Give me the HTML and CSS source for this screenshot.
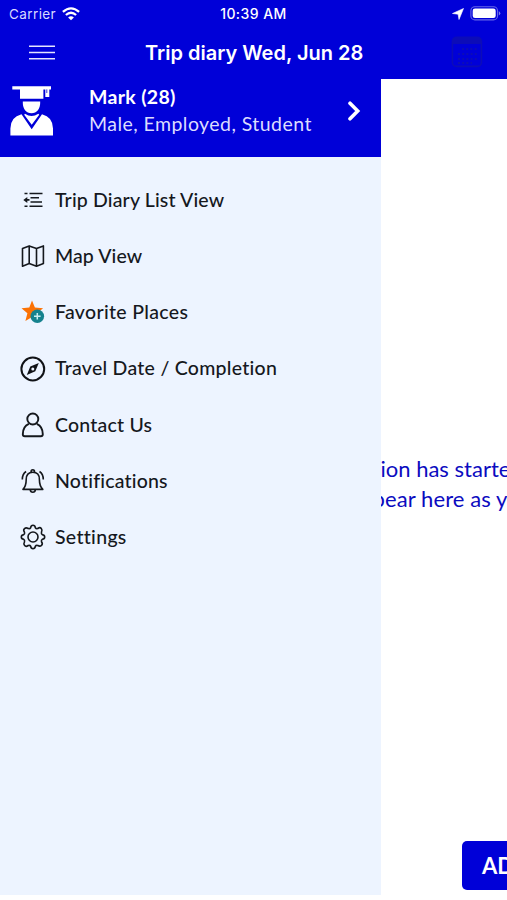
FILE: index.html
```html
<!DOCTYPE html>
<html lang="en">
<head>
<meta charset="utf-8">
<title>Trip diary</title>
<link rel="stylesheet" href="styles.css">
</head>
<body>
<div class="screen">
  <header class="top">
    <div class="status">
      <div class="carrier"><span class="carrier-name">Carrier</span>
        <svg width="18" height="14" viewBox="0 0 18 14" fill="none" stroke="#fff" stroke-width="2.3"><path d="M.9 4.9Q9-2.1 17.1 4.9M3.9 8Q9 3.6 14.1 8"/><path d="M9 13.3 6.1 10.5Q9 8.1 11.9 10.5Z" fill="#fff" stroke="none"/></svg>
      </div>
      <span class="time">10:39 AM</span>
      <div class="power">
        <svg width="12" height="12" viewBox="0 0 12 12"><path d="M11.5.5 7 11.5 6.1 6.2.5 5.5Z" fill="#fff" stroke="#fff" stroke-width=".6"/></svg>
        <svg width="31" height="15" viewBox="0 0 31 15"><rect x=".9" y=".7" width="26.6" height="13.2" rx="4" fill="none" stroke="#6666e8" stroke-width="1.1"/><rect x="2.7" y="2.5" width="23" height="9.6" rx="2.3" fill="#fff"/><path d="M28.8 5Q31.8 7.3 28.8 9.6Z" fill="#8080ee"/></svg>
      </div>
    </div>
    <div class="navbar">
      <svg class="burger" width="26" height="15" viewBox="0 0 26 15" stroke="#e4e4ff" stroke-width="1.6"><path d="M0 1.2h26M0 7.5h26M0 13.8h26"/></svg>
      <h1 class="title">Trip diary Wed, Jun 28</h1>
      <svg class="calendar" width="32" height="32" viewBox="0 0 32 32" fill="none" stroke="#0c0cb8" stroke-width="1.6"><rect x="1.4" y="1.4" width="29" height="29" rx="4"/><path d="M2 2h28v6H2Z" fill="#0c0cb8" stroke="none"/><path d="M11 13h15M7 18h19M7 23h19M7 27h14" stroke-width="2" stroke-dasharray="2 2.2"/></svg>
    </div>
  </header>
  <div class="body">
    <aside class="drawer">
      <div class="profile">
        <svg class="avatar" width="44" height="50" viewBox="0 0 44 50" fill="#fff"><path d="M2.3.3H41V3.4H39.3V11H35.3V3.4H33.4V12.8H10V3.4H2.3Z"/><path d="M36.8 3.4V7" stroke="#0000d8" stroke-width=".8"/><path d="M12.8 15.5H30.2C30.5 23 26.7 27.3 21.5 27.3S12.5 23 12.8 15.5ZM11.5 28.3Q.6 31 .4 42.5V49.5H43V42.5Q42.8 31 32 28.3L21.7 43.2Z"/><path d="M15 27.8Q21.5 32.4 28.4 27.8L29.2 28.8 21.7 38.7 14.2 28.8Z"/></svg>
        <div class="person">
          <div class="name">Mark (28)</div>
          <div class="details">Male, Employed, Student</div>
        </div>
        <svg class="chevron" width="13" height="20" viewBox="0 0 13 20" fill="none" stroke="#fff" stroke-width="3.6"><path d="M2 2.2 9.7 10 2 17.8" stroke-linecap="round"/></svg>
      </div>
      <nav class="menu">
        <a class="item"><svg class="icon" viewBox="0 0 26 26" fill="none" stroke="#15181d" stroke-width="1.6"><path d="M4.5 6.5h3M9.5 6.5H22.5M10.5 10.8H19M10.5 15H22M4.5 19.3h3M9.5 19.3H22.5M5 12.9H9.5"/><path d="M3.3 12.9 7.3 9.9V15.9Z" fill="#15181d" stroke="none"/></svg><span class="label diary">Trip Diary List View</span></a>
        <a class="item"><svg class="icon" viewBox="0 0 26 26" fill="none" stroke="#15181d" stroke-width="1.6" stroke-linejoin="round"><path d="M2.5 5.6 9.2 2.9 16.5 5.6 23.4 2.9V20.5L16.5 23.2 9.2 20.5 2.5 23.2ZM9.2 2.9V20.5M16.5 5.6V23.2"/></svg><span class="label map">Map View</span></a>
        <a class="item"><svg class="icon" viewBox="0 0 26 26"><path d="m12 1.6 2.9 7 8.2.6-6.2 5 1.8 7.5-6.6-3.8-6.7 4.1 2-7.8L1.5 9.2l7.8-.6Z" fill="#fb7204"/><circle cx="17.3" cy="17.2" r="6.8" fill="#15828e"/><path d="M17.3 13.9v6.6M14 17.2h6.6" stroke="#c8edf0" stroke-width="1.5"/></svg><span class="label favorite">Favorite Places</span></a>
        <a class="item"><svg class="icon" viewBox="0 0 26 26"><circle cx="12.8" cy="13" r="11.4" fill="none" stroke="#101216" stroke-width="2"/><path d="M18.8 7 15.3 15.3 6.8 19 10.3 10.6Z" fill="#101216"/><circle cx="12.8" cy="13" r="1.5" fill="#edf4ff"/></svg><span class="label travel">Travel Date / Completion</span></a>
        <a class="item"><svg class="icon" viewBox="0 0 26 26" fill="none" stroke="#15181d" stroke-width="1.9"><circle cx="12.8" cy="7" r="5.5"/><path d="M8.8 11.8Q2.8 14.5 2.8 22.2Q2.8 24.2 4.8 24.2H20.8Q22.8 24.2 22.8 22.2Q22.8 14.5 16.8 11.8"/></svg><span class="label contact">Contact Us</span></a>
        <a class="item"><svg class="icon" viewBox="0 0 26 26" fill="none" stroke="#15181d" stroke-width="1.6" stroke-linejoin="round"><path d="M3 21.4Q6.2 18 6.2 11.5Q6.2 4.2 12.8 4.2T19.4 11.5Q19.4 18 22.8 21.4ZM10.2 21.6Q10.5 24.2 12.8 24.2T15.4 21.6M11 4.2Q11 1.8 12.8 1.8T14.6 4.2M6.1 3.5Q2.3 6 2.3 11.5M19.5 3.5Q23.3 6 23.3 11.5"/></svg><span class="label notify">Notifications</span></a>
        <a class="item"><svg class="icon" viewBox="0 0 26 26" fill="none" stroke="#15181d" stroke-width="1.6" stroke-linejoin="round"><path d="M10.6 3.8Q11 1.3 13 1.3T15.4 3.8Q16 4.9 17.8 4.5Q20 2.9 21.3 4.5T21.5 8.2Q21.1 10 22.2 10.6Q24.7 11 24.7 13T22.2 15.4Q21.1 16 21.5 17.8Q23.1 20 21.5 21.4T17.8 21.5Q16 21.1 15.4 22.2Q15 24.7 13 24.7T10.6 22.2Q10 21.1 8.2 21.5Q6 23.1 4.6 21.5T4.5 17.8Q4.9 16 3.8 15.4Q1.3 15 1.3 13T3.8 10.6Q4.9 10 4.5 8.2Q2.9 6 4.5 4.6T8.2 4.5Q10 4.9 10.6 3.8Z"/><circle cx="13" cy="13" r="5"/></svg><span class="label settings">Settings</span></a>
      </nav>
    </aside>
    <main class="content">
      <div class="notice"><div class="line-one">ion has started</div><div class="line-two">pear here as you</div></div>
      <button class="add">ADD</button>
    </main>
  </div>
</div>
</body>
</html>
```
FILE: styles.css
```css
* { box-sizing: border-box; }
body { margin: 0; background: #fff; font-family: Lato, "Liberation Sans", sans-serif; }
.screen { width: 507px; height: 900px; overflow: hidden; display: flex; flex-direction: column; }
svg { display: block; flex: none; }

.top { height: 79px; flex: none; background: #0000d8; color: #fff; font-family: Inter, sans-serif; }
.status { height: 27px; display: grid; grid-template-columns: 1fr auto 1fr; align-items: center; padding: 0 6px 0 9px; font-size: 14px; }
.carrier { display: flex; align-items: center; gap: 6px; color: #d8d8ff; }
.carrier-name { font-size: 13.5px; letter-spacing: .4px; }
.time { font-weight: 500; letter-spacing: .45px; margin-left: -3px; }
.power { display: flex; justify-content: flex-end; align-items: center; gap: 6px; }
.navbar { height: 52px; display: flex; align-items: center; padding: 0 24px 2px 29px; }
.title { margin: 1px 0 0 90px; font-size: 20px; font-weight: 600; white-space: nowrap; letter-spacing: 0; }
.calendar { margin-left: auto; }

.body { flex: 1; display: flex; min-height: 0; }
.drawer { width: 380.5px; height: 816px; flex: none; background: #edf4ff; }
.profile { height: 78px; background: #0000d8; color: #fff; display: flex; align-items: flex-start; padding: 7px 19.5px 0 10px; }
.person { margin: -3px 0 0 35px; line-height: 27px; white-space: nowrap; }
.name { font-size: 19.5px; font-weight: 700; letter-spacing: .33px; }
.details { font-size: 19.5px; letter-spacing: .45px; color: #dcdcff; }
.chevron { margin: 15px 0 0 auto; }
.menu { padding-top: 15px; }
.item { height: 56.2px; display: flex; align-items: center; gap: 9px; padding-left: 20px; color: #15181d; }
.icon { width: 26px; height: 26px; }
.label { margin-top: -1.4px; font-size: 19.5px; font-weight: 500; white-space: nowrap; letter-spacing: .2px; }
.diary { letter-spacing: .15px; }
.map { letter-spacing: .1px; }
.favorite { letter-spacing: .33px; }
.travel { letter-spacing: .27px; }
.settings { letter-spacing: .3px; }

.content { flex: 1; min-width: 0; overflow: hidden; display: flex; flex-direction: column; justify-content: space-between; padding: 375px 0 10px; }
.notice { color: #0b0bc0; font-size: 22px; line-height: 30px; white-space: nowrap; }
.line-two { margin-left: -8px; letter-spacing: .1px; }
.add { align-self: flex-start; flex: none; width: 100px; height: 49px; margin: 0 0 0 81.5px; padding: 0 0 0 20px; border: 0; border-radius: 5px; background: #0000d8; color: #fff; font: 700 22px Lato, sans-serif; text-align: left; }
```
